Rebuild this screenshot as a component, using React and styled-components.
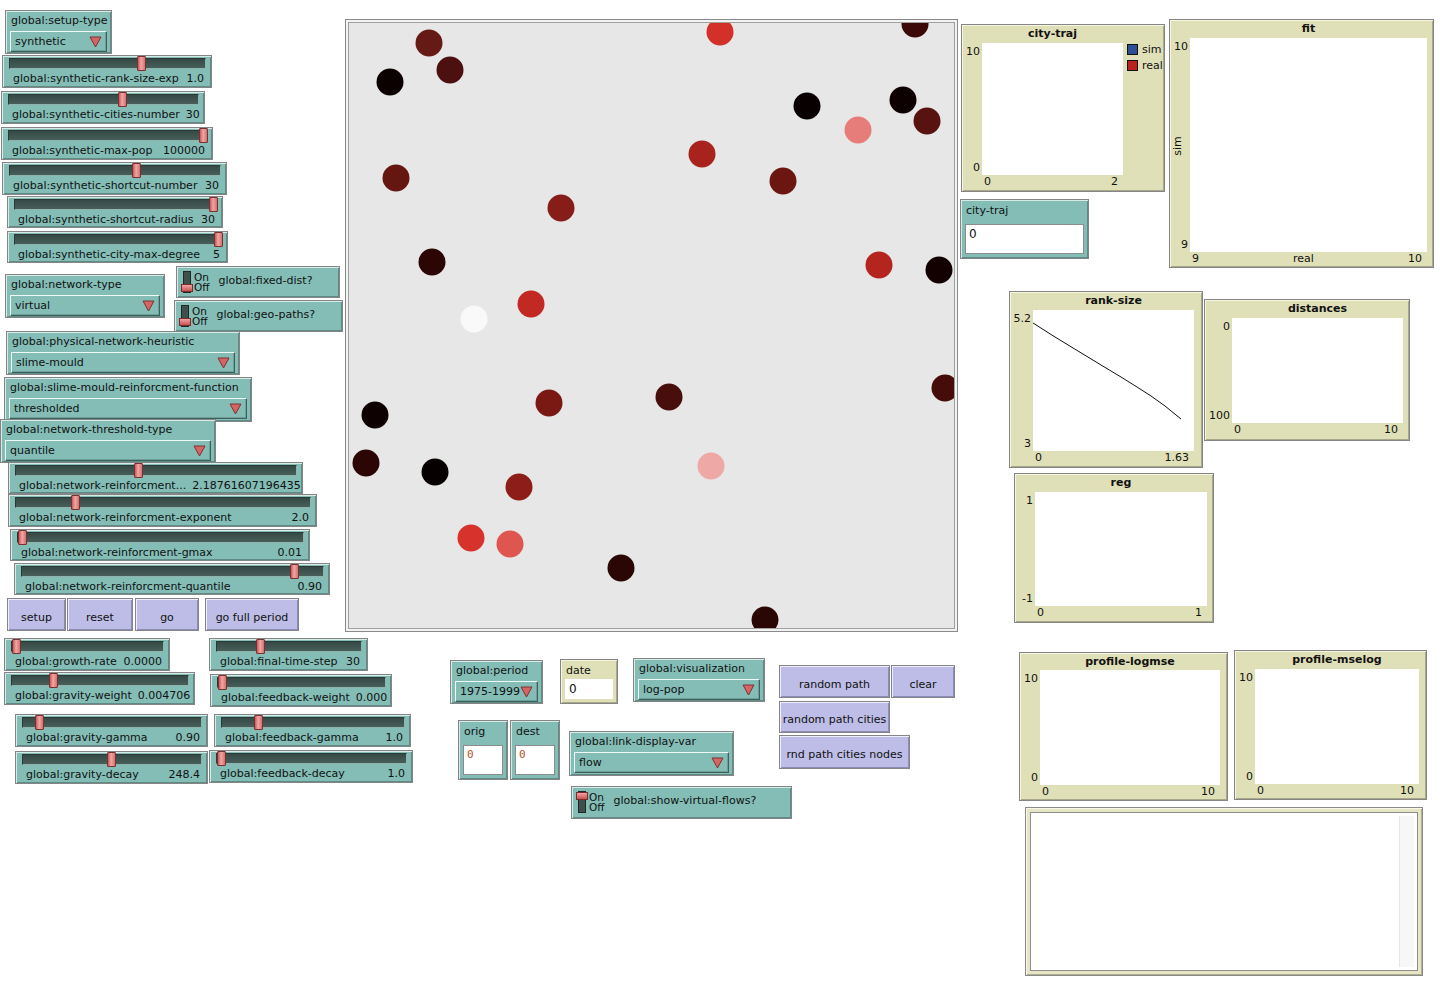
import React from 'react';
import styled, { createGlobalStyle } from 'styled-components';

const GlobalStyle = createGlobalStyle`
  html, body {
    margin: 0;
    padding: 0;
    background: #ffffff;
  }
  body {
    font-family: "DejaVu Sans", "Liberation Sans", sans-serif;
    font-size: 11px;
    color: #111;
  }
`;

// NetLogo interface: widgets sit on a free canvas, their coordinates are the model's content
const Canvas = styled.div`
  position: relative;
  width: 1451px;
  height: 993px;
  overflow: hidden;
  background: #fff;
`;

const Widget = styled.div.attrs(p => ({
  style: { left: p.$x, top: p.$y, width: p.$w, height: p.$h },
}))`
  position: absolute;
  box-sizing: border-box;
  border: 1px solid #858585;
  background: #83bdb6;
  box-shadow: inset 1px 1px 0 #d4ebe7, inset -1px -1px 0 #5d8b85;
  white-space: nowrap;
  overflow: hidden;
`;

/* ---------- slider ---------- */

const SliderBox = styled(Widget)`
  display: flex;
  flex-direction: column;
  padding: 2px 5px 0 6px;
`;

const Track = styled.div`
  position: relative;
  height: 11px;
  box-sizing: border-box;
  border: 1px solid #2b3936;
  border-bottom-color: #8fb3ad;
  border-right-color: #8fb3ad;
  background: linear-gradient(#364a46, #475e59);
`;

const Thumb = styled.div`
  position: absolute;
  top: -3px;
  width: 9px;
  height: 15px;
  box-sizing: border-box;
  border: 1px solid #7c3030;
  border-radius: 1px;
  background: linear-gradient(90deg, #c55a5a, #f2a6a6 45%, #d27070);
`;

const SliderText = styled.div`
  display: flex;
  justify-content: space-between;
  gap: 6px;
  margin-top: 3px;
  padding: 0 2px 0 4px;
  line-height: 14px;
`;

function Slider({ x, y, w, h = 33, name, value, pos }) {
  return (
    <SliderBox $x={x} $y={y} $w={w} $h={h}>
      <Track>
        <Thumb style={{ left: `calc(${pos} * (100% - 7px))` }} />
      </Track>
      <SliderText>
        <span>{name}</span>
        <span>{value}</span>
      </SliderText>
    </SliderBox>
  );
}

/* ---------- chooser ---------- */

const ChooserBox = styled(Widget)`
  display: flex;
  flex-direction: column;
  gap: 3px;
  padding: 3px 4px 0 4px;
`;

const WidgetLabel = styled.div`
  line-height: 14px;
  padding-left: 1px;
`;

const Dropdown = styled.div`
  height: 21px;
  box-sizing: border-box;
  display: flex;
  align-items: center;
  justify-content: space-between;
  padding: 0 4px 0 4px;
  border: 1px solid;
  border-color: #eef9f7 #3d625d #3d625d #eef9f7;
  box-shadow: inset -1px -1px 0 #6f9e98;
`;

const Caret = () => (
  <svg width="13" height="12" viewBox="0 0 13 12">
    <polygon points="1,1 12,1 6.5,11" fill="#d56464" stroke="#7a3434" strokeWidth="1" />
  </svg>
);

function Chooser({ x, y, w, h = 44, name, value }) {
  return (
    <ChooserBox $x={x} $y={y} $w={w} $h={h}>
      <WidgetLabel>{name}</WidgetLabel>
      <Dropdown>
        <span>{value}</span>
        <Caret />
      </Dropdown>
    </ChooserBox>
  );
}

/* ---------- switch ---------- */

const SwitchBox = styled(Widget)`
  display: flex;
  align-items: flex-start;
  padding: 4px 0 0 4px;
`;

const SwitchTrack = styled.div`
  width: 8px;
  height: 22px;
  margin-left: 2px;
  box-sizing: border-box;
  border: 1px solid #1f2a28;
  background: #3f4f4c;
  display: flex;
  flex-direction: column;
  justify-content: ${p => (p.$on ? 'flex-start' : 'flex-end')};
`;

const SwitchKnob = styled.div`
  width: 12px;
  height: 8px;
  margin-left: -3px;
  box-sizing: border-box;
  border: 1px solid #7a2c2c;
  background: linear-gradient(#f5a3a3, #c85252);
`;

const OnOff = styled.div`
  display: flex;
  flex-direction: column;
  margin-left: 3px;
  padding-top: 1px;
  font-size: 10.5px;
`;

const OnOffWord = styled.span`
  display: block;
  height: 10px;
  line-height: 10px;
`;

const SwitchName = styled.div`
  margin-left: 9px;
  line-height: 14px;
  padding-top: 3px;
`;

function Switch({ x, y, w, h = 32, name, on }) {
  return (
    <SwitchBox $x={x} $y={y} $w={w} $h={h}>
      <SwitchTrack $on={on}>
        <SwitchKnob />
      </SwitchTrack>
      <OnOff>
        <OnOffWord>On</OnOffWord>
        <OnOffWord>Off</OnOffWord>
      </OnOff>
      <SwitchName>{name}</SwitchName>
    </SwitchBox>
  );
}

/* ---------- button ---------- */

const ButtonBox = styled(Widget)`
  background: #bdbde7;
  box-shadow: inset 1px 1px 0 #ededff, inset -1px -1px 0 #8c8cba;
  display: flex;
  align-items: center;
  justify-content: center;
  padding-top: 5px;
`;

/* ---------- monitor / input ---------- */

const FieldBox = styled(Widget)`
  display: flex;
  flex-direction: column;
  padding: 4px 4px 4px 4px;
  background: ${p => (p.$monitor ? '#e0e0b8' : '#83bdb6')};
  box-shadow: ${p =>
    p.$monitor
      ? 'inset 1px 1px 0 #f5f5de, inset -1px -1px 0 #a9a98a'
      : 'inset 1px 1px 0 #d4ebe7, inset -1px -1px 0 #5d8b85'};
`;

const Field = styled.div`
  flex: 1;
  margin-top: ${p => p.$gap}px;
  box-sizing: border-box;
  background: #fff;
  border: 1px solid ${p => (p.$flat ? '#fff' : '#8c8c8c')};
  padding: 2px 3px;
  line-height: 14px;
  font-family: ${p => (p.$mono ? '"DejaVu Sans Mono", "Liberation Mono", monospace' : 'inherit')};
  color: ${p => (p.$mono ? '#b0521c' : '#111')};
  font-size: ${p => (p.$mono ? '11px' : '12px')};
`;

/* ---------- plots ---------- */

const PlotBox = styled(Widget)`
  background: #e0e0b8;
  box-shadow: inset 1px 1px 0 #f6f6e0, inset -1px -1px 0 #a8a888;
  display: grid;
  grid-template-columns: ${p => p.$left}px 1fr ${p => p.$right}px;
  grid-template-rows: ${p => p.$top}px 1fr ${p => p.$bottom}px;
`;

const PlotTitle = styled.div`
  grid-column: 2;
  grid-row: 1;
  text-align: center;
  font-weight: bold;
  line-height: 14px;
  padding-top: 2px;
`;

const YAxis = styled.div`
  grid-column: 1;
  grid-row: 2;
  display: flex;
  flex-direction: column;
  justify-content: space-between;
  align-items: flex-end;
  padding: 2px 2px 0 0;
  line-height: 14px;
`;

const YName = styled.span`
  align-self: center;
  transform: rotate(-90deg);
  margin-right: 2px;
`;

const PlotArea = styled.div`
  grid-column: 2;
  grid-row: 2;
  background: #fff;
  position: relative;
`;

const XAxis = styled.div`
  grid-column: 2;
  grid-row: 3;
  display: flex;
  justify-content: space-between;
  padding: 0 5px 0 2px;
  line-height: 14px;
`;

const Legend = styled.div`
  grid-column: 3;
  grid-row: 2;
  display: flex;
  flex-direction: column;
  gap: 3px;
  padding: 0 0 0 4px;
`;

const LegendItem = styled.div`
  display: flex;
  align-items: center;
  gap: 4px;
  line-height: 13px;
`;

const Swatch = styled.span`
  width: 11px;
  height: 11px;
  box-sizing: border-box;
  border: 1px solid #111;
  background: ${p => p.$color};
`;

function Plot({ x, y, w, h, title, left = 20, right = 6, top = 18, bottom = 16, yTop, yBottom, yName, xLeft, xRight, xName, legend, children }) {
  return (
    <PlotBox $x={x} $y={y} $w={w} $h={h} $left={left} $right={right} $top={top} $bottom={bottom}>
      <PlotTitle>{title}</PlotTitle>
      <YAxis>
        <span>{yTop}</span>
        {yName && <YName>{yName}</YName>}
        <span>{yBottom}</span>
      </YAxis>
      <PlotArea>{children}</PlotArea>
      {legend && (
        <Legend>
          {legend.map(l => (
            <LegendItem key={l.name}>
              <Swatch $color={l.color} />
              {l.name}
            </LegendItem>
          ))}
        </Legend>
      )}
      <XAxis>
        <span>{xLeft}</span>
        {xName && <span>{xName}</span>}
        <span>{xRight}</span>
      </XAxis>
    </PlotBox>
  );
}

/* ---------- world view & output ---------- */

const ViewBox = styled(Widget)`
  background: #e7e7e7;
  border: 1px solid #8a8a8a;
  box-shadow: inset 0 0 0 2px #f2f2f2, inset 0 0 0 3px #a0a0a0;
  padding: 3px;
`;

const OutputBox = styled(Widget)`
  background: #e6e6c4;
  border-color: #8a8a8a;
  box-shadow: inset 1px 1px 0 #f8f8ec, inset -1px -1px 0 #b0b090;
  padding: 4px;
`;

const OutputInner = styled.div`
  height: 100%;
  box-sizing: border-box;
  border: 1px solid #8e8e8e;
  background: #fff;
  display: flex;
  justify-content: flex-end;
  padding: 3px 3px 3px 0;
`;

const ScrollStrip = styled.div`
  width: 14px;
  background: #f7f7f7;
  border-left: 1px solid #e6e6e6;
`;

const turtles = [
  [429, 43, '#661a16'], [720, 32, '#d3302a'], [915, 24, '#3b0a08'], [390, 82, '#0c0101'],
  [450, 70, '#4d1010'], [807, 106, '#080000'], [903, 100, '#0e0101'], [858, 130, '#e77d7b'],
  [927, 121, '#581310'], [702, 154, '#a8231d'], [783, 181, '#6b1611'], [396, 178, '#661611'],
  [561, 208, '#861d18'], [432, 262, '#2c0505'], [879, 265, '#b4251f'], [939, 270, '#130101'],
  [531, 304, '#c22922'], [474, 319, '#f9f9f9'], [945, 388, '#460c0a'], [549, 403, '#7a1914'],
  [669, 397, '#470e0b'], [375, 415, '#0d0101'], [366, 463, '#2b0605'], [435, 472, '#070000'],
  [519, 487, '#8c1d18'], [711, 466, '#eea9a7'], [471, 538, '#d8322c'], [510, 544, '#df5650'],
  [621, 568, '#2a0605'], [765, 620, '#2a0605'],
];

const sliders = [
  { x: 2, y: 55, w: 210, name: 'global:synthetic-rank-size-exp', value: '1.0', pos: 0.675 },
  { x: 1, y: 91, w: 204, name: 'global:synthetic-cities-number', value: '30', pos: 0.6 },
  { x: 1, y: 127, w: 212, name: 'global:synthetic-max-pop', value: '100000', pos: 1 },
  { x: 2, y: 162, w: 225, name: 'global:synthetic-shortcut-number', value: '30', pos: 0.6 },
  { x: 7, y: 196, w: 216, h: 32, name: 'global:synthetic-shortcut-radius', value: '30', pos: 1 },
  { x: 7, y: 231, w: 221, h: 32, name: 'global:synthetic-city-max-degree', value: '5', pos: 1 },
  { x: 8, y: 462, w: 295, h: 32, name: 'global:network-reinforcment...', value: '2.18761607196435', pos: 0.434 },
  { x: 8, y: 494, w: 309, name: 'global:network-reinforcment-exponent', value: '2.0', pos: 0.19 },
  { x: 10, y: 529, w: 300, h: 32, name: 'global:network-reinforcment-gmax', value: '0.01', pos: 0 },
  { x: 14, y: 563, w: 316, h: 32, name: 'global:network-reinforcment-quantile', value: '0.90', pos: 0.91 },
  { x: 4, y: 638, w: 166, name: 'global:growth-rate', value: '0.0000', pos: 0 },
  { x: 209, y: 638, w: 159, name: 'global:final-time-step', value: '30', pos: 0.285 },
  { x: 4, y: 672, w: 191, name: 'global:gravity-weight', value: '0.004706', pos: 0.22 },
  { x: 210, y: 674, w: 182, name: 'global:feedback-weight', value: '0.000', pos: 0 },
  { x: 15, y: 714, w: 193, name: 'global:gravity-gamma', value: '0.90', pos: 0.068 },
  { x: 214, y: 714, w: 197, name: 'global:feedback-gamma', value: '1.0', pos: 0.18 },
  { x: 15, y: 751, w: 193, name: 'global:gravity-decay', value: '248.4', pos: 0.49 },
  { x: 209, y: 750, w: 204, name: 'global:feedback-decay', value: '1.0', pos: 0 },
];

const choosers = [
  { x: 5, y: 10, w: 107, name: 'global:setup-type', value: 'synthetic' },
  { x: 5, y: 274, w: 160, name: 'global:network-type', value: 'virtual' },
  { x: 6, y: 331, w: 234, name: 'global:physical-network-heuristic', value: 'slime-mould' },
  { x: 4, y: 377, w: 248, h: 45, name: 'global:slime-mould-reinforcment-function', value: 'thresholded' },
  { x: 0, y: 419, w: 216, name: 'global:network-threshold-type', value: 'quantile' },
  { x: 450, y: 660, w: 93, name: 'global:period', value: '1975-1999' },
  { x: 633, y: 658, w: 132, name: 'global:visualization', value: 'log-pop' },
  { x: 569, y: 731, w: 165, h: 45, name: 'global:link-display-var', value: 'flow' },
];

const switches = [
  { x: 176, y: 266, w: 164, name: 'global:fixed-dist?', on: false },
  { x: 174, y: 300, w: 169, name: 'global:geo-paths?', on: false },
  { x: 571, y: 786, w: 221, h: 33, name: 'global:show-virtual-flows?', on: true },
];

const buttons = [
  { x: 7, y: 598, w: 59, h: 33, label: 'setup' },
  { x: 67, y: 598, w: 66, h: 33, label: 'reset' },
  { x: 135, y: 598, w: 64, h: 33, label: 'go' },
  { x: 205, y: 598, w: 94, h: 33, label: 'go full period' },
  { x: 779, y: 665, w: 111, h: 33, label: 'random path' },
  { x: 891, y: 665, w: 64, h: 33, label: 'clear' },
  { x: 779, y: 701, w: 111, h: 32, label: 'random path cities' },
  { x: 779, y: 735, w: 131, h: 34, label: 'rnd path cities nodes' },
];

export default function App() {
  return (
    <Canvas>
      <GlobalStyle />

      <ViewBox $x={345} $y={19} $w={613} $h={613}>
        <svg width="605" height="605" viewBox="349 23 605 605">
          {turtles.map(([cx, cy, c], i) => (
            <circle key={i} cx={cx} cy={cy} r="13.5" fill={c} />
          ))}
        </svg>
      </ViewBox>

      {sliders.map(s => <Slider key={s.name} {...s} />)}
      {choosers.map(c => <Chooser key={c.name} {...c} />)}
      {switches.map(s => <Switch key={s.name} {...s} />)}
      {buttons.map(b => (
        <ButtonBox key={b.label} $x={b.x} $y={b.y} $w={b.w} $h={b.h}>{b.label}</ButtonBox>
      ))}

      <FieldBox $monitor $x={560} $y={659} $w={58} $h={45}>
        <WidgetLabel>date</WidgetLabel>
        <Field $gap={1} $flat>0</Field>
      </FieldBox>
      <FieldBox $x={458} $y={720} $w={50} $h={60}>
        <WidgetLabel>orig</WidgetLabel>
        <Field $gap={6} $mono>0</Field>
      </FieldBox>
      <FieldBox $x={510} $y={720} $w={50} $h={60}>
        <WidgetLabel>dest</WidgetLabel>
        <Field $gap={6} $mono>0</Field>
      </FieldBox>
      <FieldBox $x={960} $y={199} $w={129} $h={60}>
        <WidgetLabel>city-traj</WidgetLabel>
        <Field $gap={6}>0</Field>
      </FieldBox>

      <Plot x={961} y={24} w={204} h={168} title="city-traj" left={20} right={41}
        yTop="10" yBottom="0" xLeft="0" xRight="2"
        legend={[{ name: 'sim', color: '#2c4f96' }, { name: 'real', color: '#b8231e' }]} />

      <Plot x={1169} y={19} w={265} h={249} title="fit" left={20} right={6} bottom={15}
        yTop="10" yBottom="9" yName="sim" xLeft="9" xName="real" xRight="10" />

      <Plot x={1009} y={291} w={194} h={177} title="rank-size" left={23} right={8}
        yTop="5.2" yBottom="3" xLeft="0" xRight="1.63">
        <svg width="162" height="143" viewBox="0 0 162 143" style={{ position: 'absolute', inset: 0 }}>
          <polyline
            points="0,13 22,27 45,41 68,55 88,67 104,77 118,86 132,96 148,109"
            fill="none" stroke="#111" strokeWidth="1" />
        </svg>
      </Plot>

      <Plot x={1204} y={299} w={206} h={142} title="distances" left={27} right={6} bottom={17}
        yTop="0" yBottom="100" xLeft="0" xRight="10" />

      <Plot x={1014} y={473} w={200} h={150} title="reg" left={20} right={6}
        yTop="1" yBottom="-1" xLeft="0" xRight="1" />

      <Plot x={1019} y={652} w={209} h={149} title="profile-logmse" left={20} right={7} top={17} bottom={15}
        yTop="10" yBottom="0" xLeft="0" xRight="10" />

      <Plot x={1234} y={650} w={193} h={150} title="profile-mselog" left={20} right={7} bottom={15}
        yTop="10" yBottom="0" xLeft="0" xRight="10" />

      <OutputBox $x={1025} $y={807} $w={398} $h={169}>
        <OutputInner>
          <ScrollStrip />
        </OutputInner>
      </OutputBox>
    </Canvas>
  );
}
